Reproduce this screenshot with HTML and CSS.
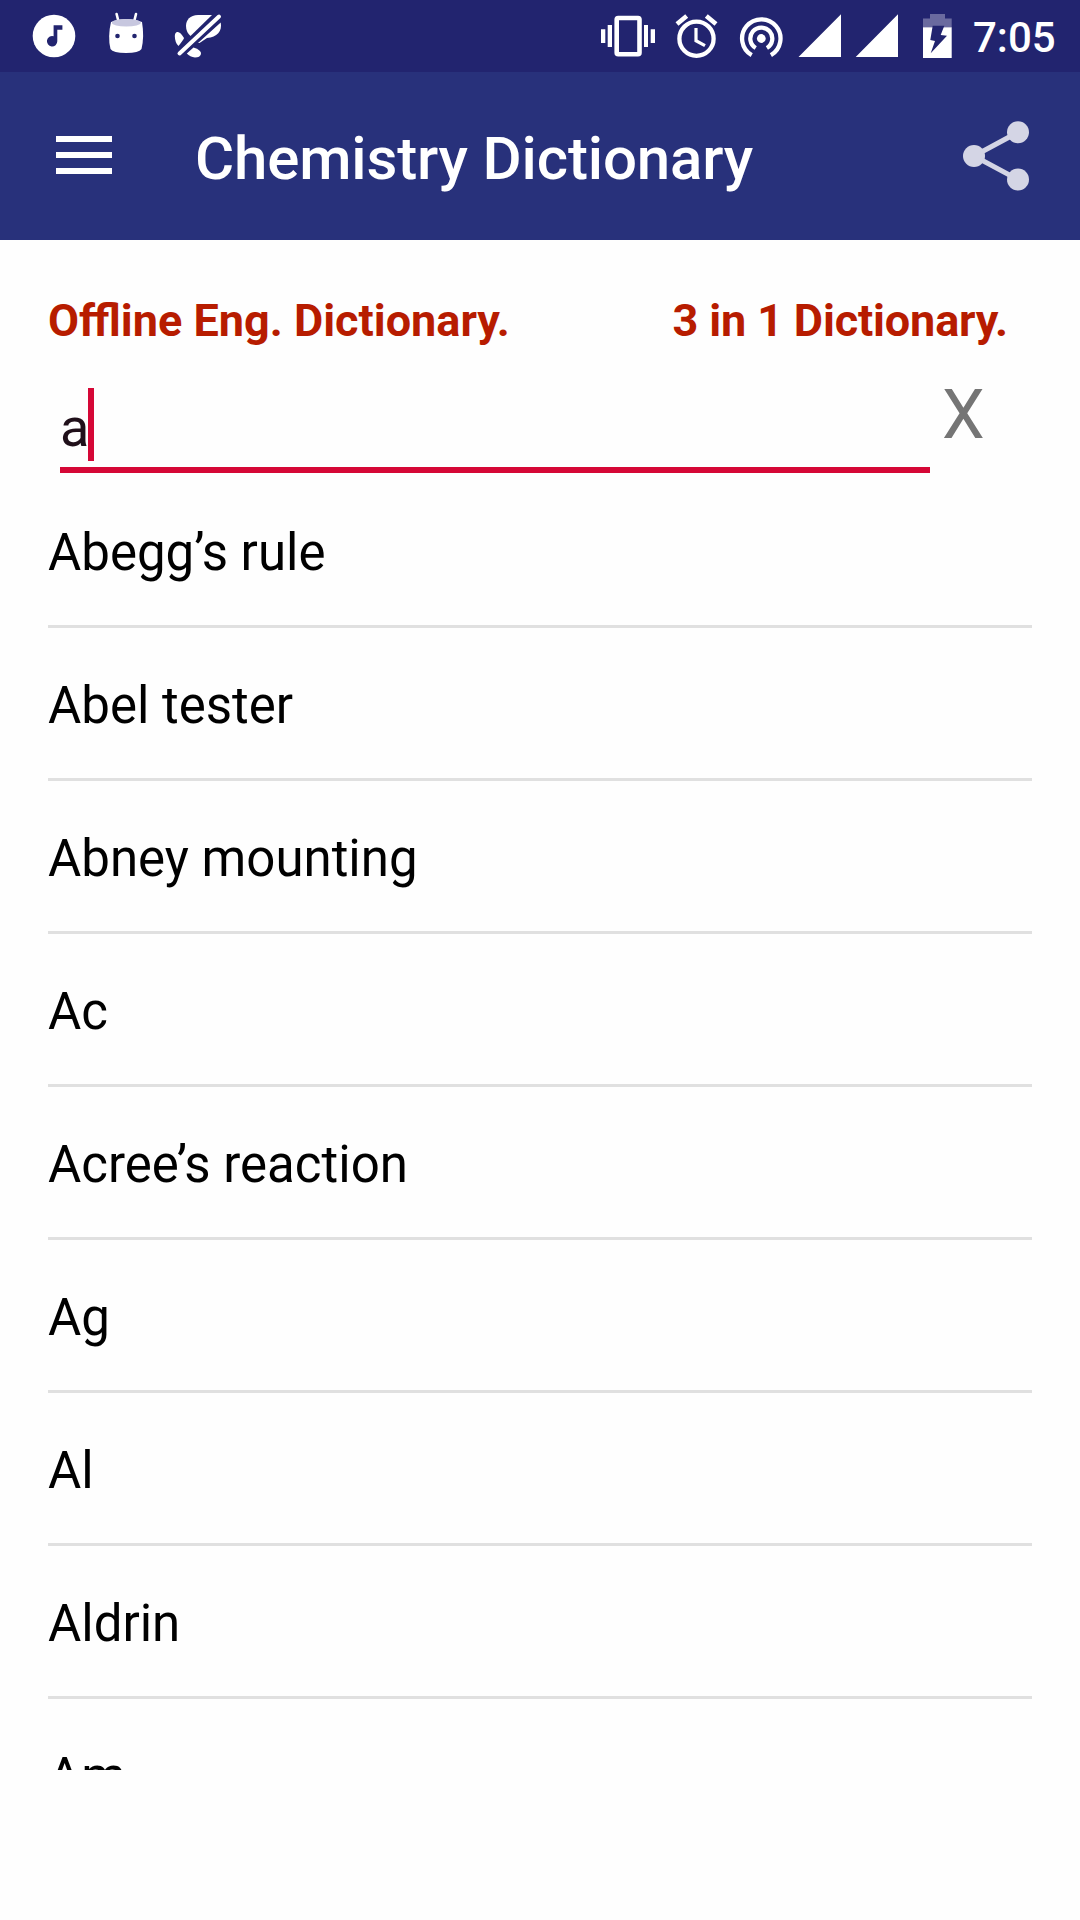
FILE: index.html
```html
<!DOCTYPE html>
<html lang="en">
<head>
  <meta charset="UTF-8">
  <meta name="viewport" content="width=device-width, initial-scale=1.0">
  <title>Chemistry Dictionary</title>
  <link rel="stylesheet" href="styles.css">
</head>
<body>

  <!-- Status bar -->
  <div class="status-bar">
    <div class="status-left">
      <svg width="60" height="72" viewBox="30 0 60 72">
        <circle cx="54" cy="36" r="21.3" fill="#fff"/>
        <path d="M53.6 25.3h8.8v4.4h-5.1v11.6a5.2 5.2 0 1 1-3.7-5z" fill="#22246f"/>
      </svg>
      <svg width="70" height="72" viewBox="90 0 70 72">
        <path d="M116.6 14l2 8M136 14l-2 8" stroke="#fff" stroke-width="2.6" stroke-linecap="round"/>
        <path d="M111 22Q126 16 142 22Q144.500 37 141.500 49Q139 53 126 53Q113 53 110.500 49Q107.500 37 111 22z" fill="#fff"/>
        <ellipse cx="126.300" cy="22.800" rx="14.500" ry="3.800" fill="#c7c7df"/>
        <circle cx="117.500" cy="36" r="2.300" fill="#22246f"/>
        <circle cx="134.500" cy="36" r="2.300" fill="#22246f"/>
      </svg>
      <svg width="80" height="72" viewBox="160 0 80 72">
        <g fill="#fff">
          <path d="M212 15H198C190 15 186 20 186 26Q186 32 190.500 36z"/>
          <path d="M220.700 22.500C222.500 31 217 37.500 207 38L199.500 43L198 43z"/>
          <path d="M177 32Q180 31 184 38Q184 39 178.500 46Q175 43 174.800 36Q175 32.500 177 32z"/>
          <path d="M193.500 47.500Q201.500 50 201 54Q200 57.500 195 57.500Q190 57 186.800 53.500z"/>
        </g>
        <path d="M179.500 53.500L219 16.500" stroke="#fff" stroke-width="4" stroke-linecap="round"/>
      </svg>
    </div>
    <div class="status-right">
      <svg width="75" height="72" viewBox="590 0 75 72">
        <rect x="616.700" y="18" width="22.800" height="36.200" rx="1.500" fill="none" stroke="#fff" stroke-width="4.600"/>
        <path d="M601 29.300h4.300v13.700H601zM607.700 25h4.300v22h-4.300zM644 25h4v22h-4zM650.700 29.300h4.300v13.700h-4.300z" fill="#fff"/>
      </svg>
      <svg width="65" height="72" viewBox="665 0 65 72" fill="none" stroke="#fff">
        <circle cx="696.500" cy="38.700" r="17.100" stroke-width="4.300"/>
        <path d="M677 24L686.700 16M706.300 16L716 24" stroke-width="4.600"/>
        <path d="M696 28v12.700l9 5" stroke-width="3.200"/>
      </svg>
      <svg width="65" height="72" viewBox="730 0 65 72" fill="none" stroke="#fff" stroke-width="4.300">
        <path d="M751.700 55.200a19.200 19.200 0 1 1 19.200 0"/>
        <path d="M755.700 48a11 11 0 1 1 11.200 0"/>
        <circle cx="761.300" cy="38.500" r="4.400" fill="#fff" stroke="none"/>
      </svg>
      <svg width="110" height="72" viewBox="795 0 110 72">
        <path d="M798.500 57L841 14.300V57zM855.700 57L898 14.300V57z" fill="#fff"/>
      </svg>
      <svg width="55" height="72" viewBox="905 0 55 72">
        <path d="M930 14h15v4.500h6.700V27.500h-28.700v-9h7z" fill="#6a6a9f"/>
        <path d="M923 27.300h28.700V58H923z" fill="#fff"/>
        <path d="M932.700 25.700h11.600L940.700 35L947 35.700L930.700 53.300L935 41L930.300 40z" fill="#22246f"/>
      </svg>
      <span class="clock">7:05</span>
    </div>
  </div>

  <!-- Toolbar -->
  <header class="toolbar">
    <svg class="menu-icon" width="56" height="38" viewBox="0 0 56 38">
      <path d="M0 0h56v6H0zM0 16h56v6H0zM0 32h56v6H0z" fill="#fff"/>
    </svg>
    <h1 class="title">Chemistry Dictionary</h1>
    <svg class="share-icon" width="66" height="70" viewBox="963 121 66 70">
      <path d="M1018 132.300L974 156L1018 179.500" fill="none" stroke="#d4d5e5" stroke-width="5"/>
      <g fill="#d4d5e5">
        <circle cx="1018" cy="132.300" r="11"/>
        <circle cx="974" cy="156" r="11"/>
        <circle cx="1018" cy="179.500" r="11"/>
      </g>
    </svg>
  </header>

  <main class="content">
    <div class="labels">
      <span>Offline Eng. Dictionary.</span>
      <span class="label-right">3 in 1 Dictionary.</span>
    </div>

    <!-- Search box -->
    <div class="search-row">
      <div class="search-field">
        <span class="query">a</span>
        <span class="caret"></span>
      </div>
      <span class="clear-btn">X</span>
    </div>

    <!-- Word list -->
    <ul class="word-list">
      <li>Abegg’s rule</li>
      <li>Abel tester</li>
      <li>Abney mounting</li>
      <li>Ac</li>
      <li>Acree’s reaction</li>
      <li>Ag</li>
      <li>Al</li>
      <li>Aldrin</li>
      <li>Am</li>
    </ul>
  </main>

</body>
</html>
```
FILE: styles.css
```css
* {
  box-sizing: border-box;
}
body {
  margin: 0;
  height: 1920px;
  overflow: hidden;
  font-family: Roboto, "Noto Sans", sans-serif;
  background-color: #fefefe;
}
svg {
  display: block;
  flex: none;
}
.status-bar {
  display: flex;
  justify-content: space-between;
  height: 72px;
  background-color: #22246f;
}
.status-left {
  display: flex;
  padding-left: 30px;
}
.status-right {
  display: flex;
  width: 490px;
}
.clock {
  padding-left: 13px;
  font-size: 42px;
  font-weight: 500;
  line-height: 76px;
  color: #fff;
}
.toolbar {
  display: flex;
  align-items: center;
  height: 168px;
  padding: 0 51px 0 56px;
  background-color: #28317b;
}
.menu-icon {
  margin-bottom: 2px;
}
.title {
  flex: 1;
  margin: 0 0 0 83px;
  padding-top: 5px;
  font-size: 60px;
  font-weight: 500;
  line-height: 72px;
  letter-spacing: -0.15px;
  color: #fff;
}
.content {
  padding: 0 48px;
}
.labels {
  display: flex;
  justify-content: space-between;
  height: 145px;
  padding: 54px 24px 0 0;
  font-size: 45px;
  font-weight: 700;
  line-height: 53px;
  color: #b71c00;
}
.label-right {
  letter-spacing: -0.15px;
}
.search-row {
  display: flex;
  height: 90px;
}
.search-field {
  display: flex;
  width: 870px;
  height: 88px;
  margin: 0 0 0 12px;
  padding-top: 3px;
  border-bottom: 6px solid #d50736;
}
.query {
  width: 28px;
  font-size: 54px;
  line-height: 79px;
  color: #20101a;
}
.caret {
  width: 6px;
  height: 73px;
  margin-top: 0;
  background-color: #d50736;
}
.clear-btn {
  margin-left: 12px;
  font-size: 68px;
  line-height: 60px;
  color: #757575;
}
.word-list {
  height: 1295px;
  margin: 0;
  padding: 0;
  overflow: hidden;
  list-style: none;
}
.word-list li {
  height: 153px;
  border-bottom: 3px solid #e0e0e0;
  font-size: 51px;
  line-height: 156px;
  color: #000;
}
```
